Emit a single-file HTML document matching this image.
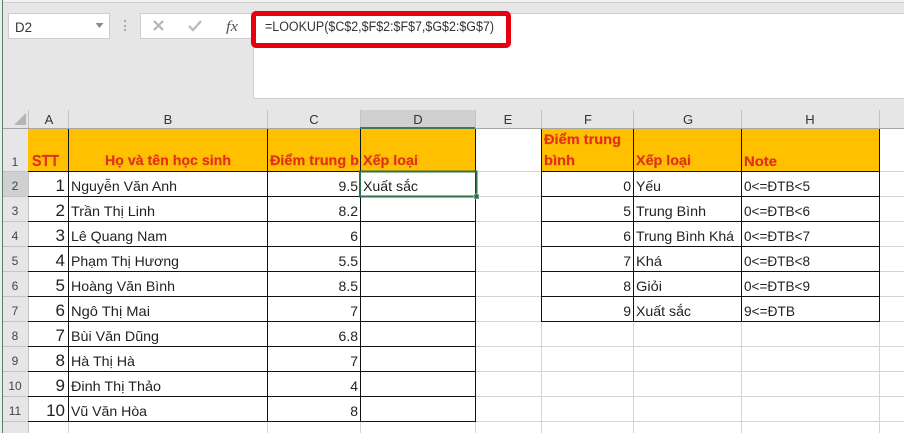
<!DOCTYPE html>
<html><head><meta charset="utf-8"><style>
html,body{margin:0;padding:0;width:904px;height:433px;overflow:hidden;background:#fff}
svg{display:block}
text{font-family:"Liberation Sans",sans-serif;font-size:14px;fill:#222}
.b{font-weight:bold;fill:#e2301a;font-size:14px;stroke:#e2301a;stroke-width:.2}
.h{font-size:13px;fill:#333;text-anchor:middle}
.n{font-size:12px;fill:#444;text-anchor:middle}
</style></head><body>
<svg width="904" height="433" viewBox="0 0 904 433" xmlns="http://www.w3.org/2000/svg">
<rect width="904" height="433" fill="#fff"/>
<!-- ribbon -->
<rect width="904" height="128" fill="#e6e6e6"/>
<rect x="0" y="2" width="904" height="1" fill="#cfcfcf"/>
<rect x="0" y="0" width="904" height="2" fill="#f2f2f2"/>
<!-- name box -->
<rect x="8.5" y="13.5" width="101" height="25" fill="#fff" stroke="#cdcdcd"/>
<text x="15" y="32" style="font-size:14px;fill:#333" textLength="17" lengthAdjust="spacingAndGlyphs">D2</text>
<path d="M95.5 23h8l-4 5z" fill="#8a8a8a"/>
<rect x="124" y="20" width="2" height="2" fill="#aaa"/><rect x="124" y="25" width="2" height="2" fill="#aaa"/><rect x="124" y="29" width="2" height="2" fill="#aaa"/>
<!-- fx box -->
<rect x="140.5" y="13.5" width="112" height="25" fill="#fff" stroke="#cdcdcd"/>
<path d="M154 21l9 9M163 21l-9 9" stroke="#b5b5b5" stroke-width="2.2" fill="none"/>
<path d="M189 26l4 4 8-9" stroke="#bdbdbd" stroke-width="2.4" fill="none"/>
<text x="226" y="31" style="font-family:'Liberation Serif',serif;font-style:italic;font-size:15px;fill:#555" textLength="12" lengthAdjust="spacingAndGlyphs">fx</text>
<!-- formula bar -->
<rect x="253.5" y="13.5" width="652" height="85" fill="#fff" stroke="#cdcdcd"/>
<rect x="253.5" y="13.5" width="255" height="32" rx="2.5" fill="#fff" stroke="#e8000f" stroke-width="5"/>
<text x="265" y="31" style="font-size:13.5px;fill:#333" textLength="229" lengthAdjust="spacingAndGlyphs">=LOOKUP($C$2,$F$2:$F$7,$G$2:$G$7)</text>
<!-- grid lines -->
<g stroke="#d4d4d4" stroke-width="1">
<path d="M28.5 128V433M68.5 128V433M267.5 128V433M360.5 128V433M475.5 128V433M541.5 128V433M633.5 128V433M741.5 128V433M879.5 128V433"/>
<path d="M28 171.5H904M28 196.5H904M28 221.5H904M28 246.5H904M28 271.5H904M28 296.5H904M28 321.5H904M28 346.5H904M28 371.5H904M28 396.5H904M28 421.5H904"/>
</g>
<!-- row header -->
<rect x="2" y="128" width="26" height="305" fill="#e6e6e6"/>
<rect x="3" y="171" width="25" height="25" fill="#cfd1d0"/>
<g stroke="#c4c4c4"><path d="M3 171.5H28M3 196.5H28M3 221.5H28M3 246.5H28M3 271.5H28M3 296.5H28M3 321.5H28M3 346.5H28M3 371.5H28M3 396.5H28M3 421.5H28M28.5 128V433"/></g>
<rect x="0" y="0" width="2" height="433" fill="#e8efe9"/>
<rect x="2" y="0" width="1" height="433" fill="#5d7f6c"/>
<!-- column header -->
<rect x="360" y="110" width="115" height="18" fill="#d0d0d0"/>
<g stroke="#c2c2c2"><path d="M28.5 110V128M68.5 110V128M267.5 110V128M360.5 110V128M475.5 110V128M541.5 110V128M633.5 110V128M741.5 110V128M879.5 110V128"/></g>
<rect x="3" y="128" width="901" height="1" fill="#a6a6a6"/>
<path d="M14 125h12v-12z" fill="#b4b4b4"/>
<text class="h" x="49" y="124">A</text><text class="h" x="168" y="124">B</text><text class="h" x="314" y="124">C</text><text class="h" x="418" y="124">D</text><text class="h" x="508" y="124">E</text><text class="h" x="588" y="124">F</text><text class="h" x="688" y="124">G</text><text class="h" x="810" y="124">H</text>
<g>
<text class="n" x="15" y="166">1</text><text class="n" x="15" y="190">2</text><text class="n" x="15" y="215">3</text><text class="n" x="15" y="240">4</text><text class="n" x="15" y="265">5</text><text class="n" x="15" y="290">6</text><text class="n" x="15" y="315">7</text><text class="n" x="15" y="340">8</text><text class="n" x="15" y="365">9</text><text class="n" x="15" y="390">10</text><text class="n" x="15" y="415">11</text>
</g>
<!-- orange headers -->
<rect x="28" y="129" width="447" height="42" fill="#ffc000"/>
<rect x="541" y="129" width="338" height="42" fill="#ffc000"/>
<!-- black borders -->
<g stroke="#111" stroke-width="1" fill="none">
<path d="M68.5 129V421.5M267.5 129V421.5M360.5 129V421.5M475.5 129V421.5"/>
<path d="M28 171.5H476M28 196.5H476M28 221.5H476M28 246.5H476M28 271.5H476M28 296.5H476M28 321.5H476M28 346.5H476M28 371.5H476M28 396.5H476M28 421.5H476"/>
<path d="M541.5 129V321.5M633.5 129V321.5M741.5 129V321.5M879.5 129V321.5"/>
<path d="M541 171.5H880M541 196.5H880M541 221.5H880M541 246.5H880M541 271.5H880M541 296.5H880M541 321.5H880"/>
</g>
<!-- header text -->
<text class="b" x="32" y="166" style="font-size:16px" textLength="27" lengthAdjust="spacingAndGlyphs">STT</text>
<text class="b" x="105" y="165" textLength="126" lengthAdjust="spacingAndGlyphs">Họ và tên học sinh</text>
<text class="b" x="270" y="165" textLength="89" lengthAdjust="spacingAndGlyphs">Điểm trung b</text>
<text class="b" x="363" y="165" textLength="55" lengthAdjust="spacingAndGlyphs">Xếp loại</text>
<text class="b" x="544" y="144" textLength="77" lengthAdjust="spacingAndGlyphs">Điểm trung</text>
<text class="b" x="544" y="165" textLength="31" lengthAdjust="spacingAndGlyphs">bình</text>
<text class="b" x="636" y="165" textLength="55" lengthAdjust="spacingAndGlyphs">Xếp loại</text>
<text class="b" x="744" y="166" textLength="33" lengthAdjust="spacingAndGlyphs">Note</text>
<!-- STT -->
<g style="text-anchor:end">
<text x="65" y="191" style="font-size:17px">1</text><text x="65" y="216" style="font-size:17px">2</text><text x="65" y="241" style="font-size:17px">3</text><text x="65" y="266" style="font-size:17px">4</text><text x="65" y="291" style="font-size:17px">5</text><text x="65" y="316" style="font-size:17px">6</text><text x="65" y="341" style="font-size:17px">7</text><text x="65" y="366" style="font-size:17px">8</text><text x="65" y="391" style="font-size:17px">9</text><text x="65" y="416" style="font-size:17px">10</text>
</g>
<!-- names -->
<text x="71" y="191" textLength="106" lengthAdjust="spacingAndGlyphs">Nguyễn Văn Anh</text>
<text x="71" y="216" textLength="84" lengthAdjust="spacingAndGlyphs">Trần Thị Linh</text>
<text x="71" y="241" textLength="96" lengthAdjust="spacingAndGlyphs">Lê Quang Nam</text>
<text x="71" y="266" textLength="108" lengthAdjust="spacingAndGlyphs">Phạm Thị Hương</text>
<text x="71" y="291" textLength="104" lengthAdjust="spacingAndGlyphs">Hoàng Văn Bình</text>
<text x="71" y="316" textLength="79" lengthAdjust="spacingAndGlyphs">Ngô Thị Mai</text>
<text x="71" y="341" textLength="88" lengthAdjust="spacingAndGlyphs">Bùi Văn Dũng</text>
<text x="71" y="366" textLength="64" lengthAdjust="spacingAndGlyphs">Hà Thị Hà</text>
<text x="71" y="391" textLength="90" lengthAdjust="spacingAndGlyphs">Đinh Thị Thảo</text>
<text x="71" y="416" textLength="76" lengthAdjust="spacingAndGlyphs">Vũ Văn Hòa</text>
<!-- scores -->
<g style="text-anchor:end">
<text x="358" y="191">9.5</text><text x="358" y="216">8.2</text><text x="358" y="241">6</text><text x="358" y="266">5.5</text><text x="358" y="291">8.5</text><text x="358" y="316">7</text><text x="358" y="341">6.8</text><text x="358" y="366">7</text><text x="358" y="391">4</text><text x="358" y="416">8</text>
<text x="631" y="191">0</text><text x="631" y="216">5</text><text x="631" y="241">6</text><text x="631" y="266">7</text><text x="631" y="291">8</text><text x="631" y="316">9</text>
</g>
<text x="363" y="191" textLength="55" lengthAdjust="spacingAndGlyphs">Xuất sắc</text>
<!-- selection -->
<rect x="360" y="171.5" width="116.5" height="25" fill="none" stroke="#2f6f4b" stroke-width="2"/>
<rect x="474" y="194" width="5" height="5" fill="#2f6f4b" stroke="#fff" stroke-width="0.5"/>
<rect x="360" y="127" width="115" height="2" fill="#3f7a55"/>
<!-- lookup -->
<text x="636" y="191" textLength="25" lengthAdjust="spacingAndGlyphs">Yếu</text>
<text x="636" y="216" textLength="70" lengthAdjust="spacingAndGlyphs">Trung Bình</text>
<text x="636" y="241" textLength="98" lengthAdjust="spacingAndGlyphs">Trung Bình Khá</text>
<text x="636" y="266" textLength="26" lengthAdjust="spacingAndGlyphs">Khá</text>
<text x="636" y="291" textLength="26" lengthAdjust="spacingAndGlyphs">Giỏi</text>
<text x="636" y="316" textLength="55" lengthAdjust="spacingAndGlyphs">Xuất sắc</text>
<text x="744" y="191" textLength="66" lengthAdjust="spacingAndGlyphs">0&lt;=ĐTB&lt;5</text>
<text x="744" y="216" textLength="66" lengthAdjust="spacingAndGlyphs">0&lt;=ĐTB&lt;6</text>
<text x="744" y="241" textLength="66" lengthAdjust="spacingAndGlyphs">0&lt;=ĐTB&lt;7</text>
<text x="744" y="266" textLength="66" lengthAdjust="spacingAndGlyphs">0&lt;=ĐTB&lt;8</text>
<text x="744" y="291" textLength="66" lengthAdjust="spacingAndGlyphs">0&lt;=ĐTB&lt;9</text>
<text x="744" y="316" textLength="51" lengthAdjust="spacingAndGlyphs">9&lt;=ĐTB</text>
</svg>
</body></html>
